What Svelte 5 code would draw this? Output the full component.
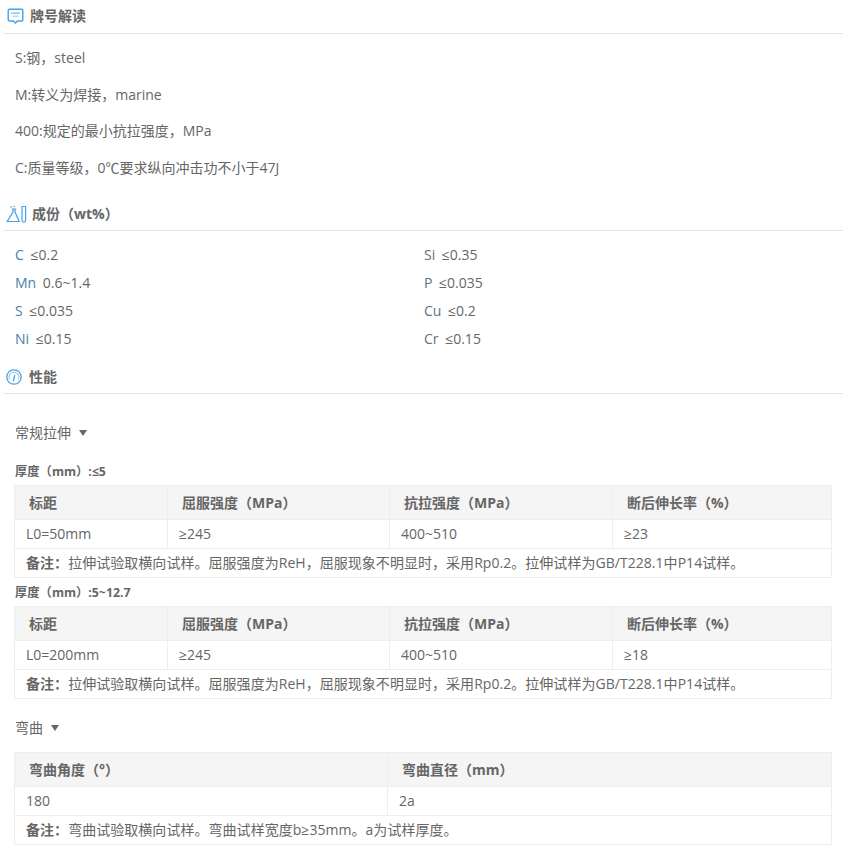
<script>
  const grid = [['C','≤0.2'],['Si','≤0.35'],['Mn','0.6~1.4'],['P','≤0.035'],['S','≤0.035'],['Cu','≤0.2'],['Ni','≤0.15'],['Cr','≤0.15']];
  const paras = ['S:钢，steel','M:转义为焊接，marine','400:规定的最小抗拉强度，MPa','C:质量等级，0℃要求纵向冲击功不小于47J'];
  const note1 = '拉伸试验取横向试样。屈服强度为ReH，屈服现象不明显时，采用Rp0.2。拉伸试样为GB/T228.1中P14试样。';
  const tensile = [
    {title:'厚度（mm）:≤5', l:'L0=50mm', e:'≥23'},
    {title:'厚度（mm）:5~12.7', l:'L0=200mm', e:'≥18'}
  ];
</script>

<main class="page">
  <header class="head h1">
    <svg width="17" height="17" viewBox="0 0 17 17" fill="none" stroke="#45a2e8" stroke-width="1.4">
      <path d="M2.5 1.2h12a1.3 1.3 0 0 1 1.3 1.3v9.2a1.3 1.3 0 0 1-1.3 1.3h-4l-2 2-2-2h-4a1.3 1.3 0 0 1-1.3-1.3V2.500a1.300 1.300 0 0 1 1.300-1.300z"/>
      <path d="M4.200 5.200h8.600" stroke="#7cc0f0"/>
      <path d="M5.500 8.200h6" stroke="#a5d4f5"/>
    </svg>
    <h2>牌号解读</h2>
  </header>
  <section class="paras">
    {#each paras as p}<p>{p}</p>{/each}
  </section>

  <header class="head h2">
    <svg width="21" height="18" viewBox="0 0 21 18" fill="none" stroke="#45a2e8" stroke-width="1.2">
      <path d="M7 4v3L1.200 16.500h12L9 7V4M5.800 4h4.400"/>
      <path d="M4.500 1.500l1 1M8.500 .8l-1 1"/>
      <path d="M15.500 1.500h4.500M16 1.500v13.800a1.800 1.800 0 0 0 3.600 0V1.500"/>
    </svg>
    <h2>成份（wt%）</h2>
  </header>
  <section class="grid">
    {#each grid as [k,v], i}
      <div><span class="sym" class:right={i % 2 === 1}>{k}</span> {v}</div>
    {/each}
  </section>

  <header class="head h3">
    <svg width="16" height="16" viewBox="0 0 16 16" fill="none" stroke="#45a2e8" stroke-width="1.300">
      <circle cx="8" cy="8" r="7.200"/>
      <path d="M3.500 10.500a5 5 0 1 1 9 0" stroke="#8cc8f2" stroke-width="1.100"/>
      <path d="M7.300 12.300l1.500-6.300" stroke-width="1.300"/>
    </svg>
    <h2>性能</h2>
  </header>

  <div class="toggle first">常规拉伸<span class="caret"></span></div>

  {#each tensile as t, i}
    <h3 class:second={i === 1}>{t.title}</h3>
    <table>
      <colgroup><col style="width:153px"><col style="width:222px"><col style="width:223px"><col></colgroup>
      <thead><tr><th>标距</th><th>屈服强度（MPa）</th><th>抗拉强度（MPa）</th><th>断后伸长率（%）</th></tr></thead>
      <tbody>
        <tr><td>{t.l}</td><td>≥245</td><td>400~510</td><td>{t.e}</td></tr>
        <tr><td colspan="4" class="note"><b>备注：</b>{note1}</td></tr>
      </tbody>
    </table>
  {/each}

  <div class="toggle bend">弯曲<span class="caret"></span></div>
  <table>
    <colgroup><col style="width:373px"><col></colgroup>
    <thead><tr><th>弯曲角度（°）</th><th>弯曲直径（mm）</th></tr></thead>
    <tbody>
      <tr><td>180</td><td>2a</td></tr>
      <tr><td colspan="2" class="note"><b>备注：</b>弯曲试验取横向试样。弯曲试样宽度b≥35mm。a为试样厚度。</td></tr>
    </tbody>
  </table>
</main>

<style>
  :global(body) { margin: 0; background: #fff; }
  .page {
    width: 848px; height: 853px; overflow: hidden; box-sizing: border-box;
    font-family: "Open Sans", "Noto Sans CJK SC", sans-serif;
    font-size: 14px; color: #666;
  }
  .head {
    display: flex; align-items: center; box-sizing: border-box;
    margin: 0 5px 0 4px; border-bottom: 1px solid #e3e3e3;
  }
  .head h2 { margin: 0; font-size: 14px; font-weight: 700; color: #666; line-height: 18px; }
  .h1 { height: 34px; padding: 0 0 1px 3px; gap: 6px; }
  .h2 { height: 34px; margin-top: 11px; padding: 0 0 0 2px; gap: 5px; }
  .h3 { height: 35px; padding: 2px 0 0 2px; gap: 7px; }
  .paras { padding: 6px 0 0 15px; }
  .paras p { margin: 0; height: 36.6px; line-height: 36.6px; }
  .grid {
    display: grid; grid-template-columns: 409px 1fr;
    padding: 10px 0 0 15px; grid-auto-rows: 28px; line-height: 28px; height: 128px; box-sizing: border-box;
  }
  .sym { color: #4a7fa8; margin-right: 3px; }
  .sym.right { color: #607282; }
  .toggle { display: flex; align-items: center; margin-left: 15px; height: 20px; }
  .first { margin-top: 28px; }
  .bend { margin-top: 18px; }
  .caret {
    width: 0; height: 0; margin: 2px 0 0 8px;
    border-left: 4px solid transparent; border-right: 4px solid transparent; border-top: 6px solid #666;
  }
  h3 {
    margin: 22px 0 5px 15px; font-size: 12.3px; line-height: 16px; font-weight: 700; color: #666;
  }
  h3.second { margin: 7px 0 5px 15px; }
  .bend + table { margin-top: 15px; }
  table {
    border-collapse: collapse; table-layout: fixed; width: 818px; margin-left: 14px;
    line-height: 20px;
  }
  th, td { border: 1px solid #eee; text-align: left; box-sizing: border-box; }
  th { height: 34px; padding: 0 14px; background: #f5f5f5; font-size: 14px; font-weight: 700; color: #666; }
  td { height: 29px; padding: 0 11px; }
  td.note { height: 29px; font-size: 14px; white-space: nowrap; letter-spacing: .04px; }
</style>
